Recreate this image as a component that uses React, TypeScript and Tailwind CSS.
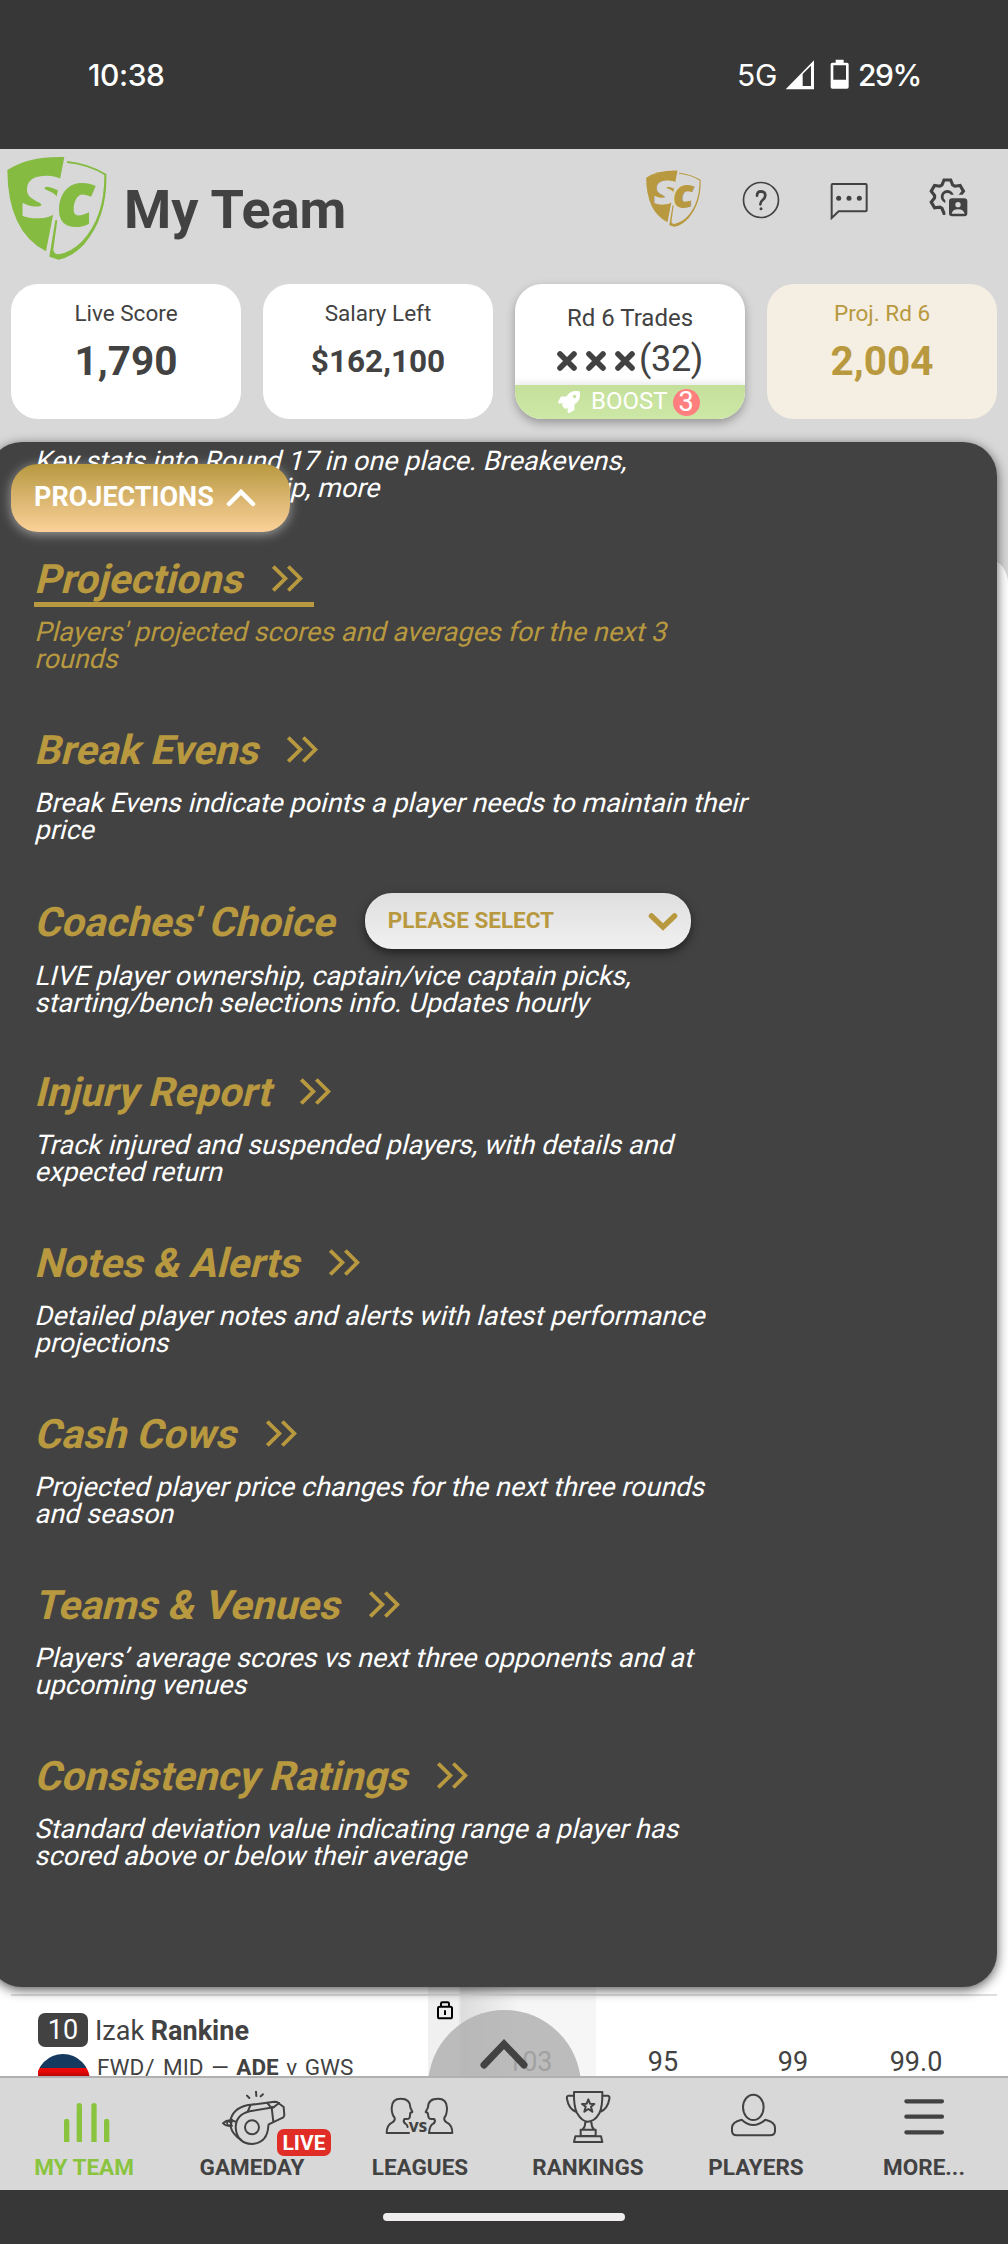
import React from "react";
import { FaRocket } from "react-icons/fa";

const INK = "#424242";
const GOLD = "#b8993f";

function Logo({ color, className }: { color: string; className: string }) {
  return (
    <svg viewBox="20 348 300 312" className={className} preserveAspectRatio="none">
      <path d="M21 390Q85 348 192 351L137 634Q22 575 21 390Z" fill={color} />
      <path
        fillRule="evenodd"
        fill={color}
        d="M201 363Q266 370 318 402Q322 530 252 612Q216 651 175 659L147 650L165 541L171 541L159 628Q159 643 175 643Q214 636 246 603Q313 530 312 405Q266 376 200 369Z"
      />
      <text
        x="66"
        y="532"
        fill="#d8d8d8"
        stroke="#d8d8d8"
        strokeWidth="5"
        fontFamily="Open Sans"
        fontStyle="italic"
        fontWeight="800"
        fontSize="220"
        textLength="124"
        lengthAdjust="spacingAndGlyphs"
      >
        s
      </text>
      <text
        x="166"
        y="557"
        fill={color}
        stroke="#d8d8d8"
        strokeWidth="14"
        paintOrder="stroke"
        fontFamily="Open Sans"
        fontStyle="italic"
        fontWeight="800"
        fontSize="226"
        textLength="117"
        lengthAdjust="spacingAndGlyphs"
      >
        c
      </text>
    </svg>
  );
}

function gearPath(cx: number, cy: number) {
  const pts: string[] = [];
  for (let i = 0; i < 6; i++) {
    const a = (i * Math.PI) / 3;
    const corners = [
      [-16, -35],
      [-10, -50],
      [10, -50],
      [16, -35],
    ];
    for (const [x, y] of corners) {
      const px = cx + x * Math.cos(a) - y * Math.sin(a);
      const py = cy + x * Math.sin(a) + y * Math.cos(a);
      pts.push(px.toFixed(1) + " " + py.toFixed(1));
    }
  }
  return "M" + pts.join("L") + "Z";
}

function StatusBar() {
  return (
    <div className="flex h-[149px] shrink-0 items-start justify-between bg-[#373737] pl-[88px] pr-[89px] pt-[54px] font-['Inter'] text-[30px] leading-[42px] text-white">
      <span className="font-medium tracking-[-0.4px]">10:38</span>
      <div className="flex items-start">
        <span className="mr-[8px] tracking-[-0.3px]">5G</span>
        <svg viewBox="844 55 195 99" className="mt-[4px] h-[33px] w-[65px]" fill="#fff">
          <path fillRule="evenodd" d="M846 149L931 62V149ZM897 103L922 78V139H897Z" />
          <path fillRule="evenodd" d="M996 60H1020V69H1030Q1035 69 1035 74V142Q1035 147 1030 147H986Q981 147 981 142V74Q981 69 986 69H996ZM989 77V120H1027V77Z" />
        </svg>
        <span className="ml-[8px] w-[61px] whitespace-nowrap font-medium tracking-[-1.4px]">29%</span>
      </div>
    </div>
  );
}

function HeaderIcons() {
  return (
    <div className="flex items-start">
      <Logo color={GOLD} className="mt-[21px] h-[57px] w-[55px]" />
      <svg viewBox="709 420 120 120" className="ml-[40px] mt-[31px] size-[40px]" fill="none" stroke={INK}>
        <circle cx="769" cy="480" r="52.5" strokeWidth="5" />
        <path d="M757 467Q757 454 769 454Q782 455 782 467Q781 475 774 480Q767 485 767 493" strokeWidth="8" strokeLinecap="round" />
        <circle cx="769" cy="506" r="4.5" fill={INK} stroke="none" />
      </svg>
      <svg viewBox="973 420 120 120" className="ml-[48px] mt-[31px] size-[40px]" fill="none" stroke={INK}>
        <path d="M981 534V435Q981 432 984 432H1083Q1086 432 1086 435V511Q1086 514 1083 514H1002Z" strokeWidth="6" />
        <g fill={INK} stroke="none">
          <circle cx="1002" cy="475" r="7.5" />
          <circle cx="1033" cy="475" r="7.5" />
          <circle cx="1064" cy="475" r="7.5" />
        </g>
      </svg>
      <svg viewBox="1270 411 120 120" className="ml-[59px] mt-[28px] size-[40px]" fill="none" stroke={INK}>
        <clipPath id="gearclip">
          <path d="M1260 400H1400V464H1337Q1322 464 1322 479V540H1260Z" />
        </clipPath>
        <g clipPath="url(#gearclip)">
          <path d={gearPath(1328, 470)} strokeWidth="9.5" />
          <circle cx="1328" cy="470" r="15.5" strokeWidth="8.5" />
        </g>
        <rect x="1333" y="475" width="55" height="54" rx="9" fill={INK} stroke="none" />
        <circle cx="1360" cy="494" r="8" fill="#d8d8d8" stroke="none" />
        <path d="M1341 521Q1344 508 1360 508T1380 521Z" fill="#d8d8d8" stroke="none" />
      </svg>
    </div>
  );
}

function Cross() {
  return (
    <svg viewBox="0 0 20 20" className="size-[20px]" stroke={INK} strokeWidth="5.6" strokeLinecap="round">
      <path d="M3 3L17 17M17 3L3 17" />
    </svg>
  );
}

function StatCard({ label, value, small, gold }: { label: string; value: string; small?: boolean; gold?: boolean }) {
  return (
    <div className={"flex h-[135px] flex-col items-center rounded-[27px] pt-[16px] " + (gold ? "bg-[#f5eee2] text-[#b8993f]" : "bg-white text-[#424242]")}>
      <span className="text-[22.5px] leading-[27px]">{label}</span>
      <span className={(small ? "text-[31.5px] leading-[69px]" : "text-[40.5px] leading-[69px]") + " font-bold"}>{value}</span>
    </div>
  );
}

function TradesCard() {
  return (
    <div className="flex h-[135px] flex-col items-center overflow-hidden rounded-[27px] bg-white pt-[20px] text-[#424242] shadow-[0_4px_10px_rgba(0,0,0,0.3)]">
      <span className="text-[24px] leading-[28px]">Rd 6 Trades</span>
      <div className="mt-[4px] flex h-[49px] items-center gap-[9px]">
        <Cross />
        <Cross />
        <Cross />
        <span className="-ml-[5px] -mt-[2px] text-[36px] leading-[45px] tracking-[-0.3px]">(32)</span>
      </div>
      <div className="flex h-[34px] w-full items-center bg-linear-to-b from-[#c5e09b] to-[#cde8a6] pl-[43px] text-white shadow-[0_-2px_8px_rgba(0,0,0,0.1)]">
        <FaRocket className="size-[22px]" />
        <span className="-mt-[2px] ml-[11px] text-[24px] leading-[30px]">BOOST</span>
        <span className="ml-[5px] mt-px flex size-[27px] items-center justify-center rounded-full bg-[#ff7f7f] text-[27px] leading-[27px]">3</span>
      </div>
    </div>
  );
}

function DoubleChevron() {
  return (
    <svg viewBox="0 0 93 80" className="h-[27px] w-[31px]" fill="none" stroke={GOLD} strokeWidth="11.5">
      <path d="M4 4L40 40L4 76M49 4L85 40L49 76" />
    </svg>
  );
}

function ObliqueLines({ lines }: { lines: string[] }) {
  return (
    <>
      {lines.map((line) => (
        <span key={line} className="block w-max origin-[0_23px] -skew-x-[14deg]">
          {line}
        </span>
      ))}
    </>
  );
}

const items = [
  { title: "Projections", lines: ["Players' projected scores and averages for the next 3", "rounds"], active: true },
  { title: "Break Evens", lines: ["Break Evens indicate points a player needs to maintain their", "price"] },
  { title: "Coaches' Choice", lines: ["LIVE player ownership, captain/vice captain picks,", "starting/bench selections info. Updates hourly"], select: true },
  { title: "Injury Report", lines: ["Track injured and suspended players, with details and", "expected return"] },
  { title: "Notes & Alerts", lines: ["Detailed player notes and alerts with latest performance", "projections"] },
  { title: "Cash Cows", lines: ["Projected player price changes for the next three rounds", "and season"] },
  { title: "Teams & Venues", lines: ["Players’ average scores vs next three opponents and at", "upcoming venues"] },
  { title: "Consistency Ratings", lines: ["Standard deviation value indicating range a player has", "scored above or below their average"] },
];

function MenuPanel() {
  return (
    <div className="absolute -left-[12px] top-[442px] h-[1545px] w-[1009px] rounded-[34px] bg-[#424242] pl-[46px] pt-[6px] text-[27px] leading-[27px] text-white shadow-[0_3px_12px_rgba(0,0,0,0.65)]">
      <ObliqueLines lines={["Key stats into Round 17 in one place. Breakevens,", "projections, ownership, more"]} />
      <button className="absolute left-[23px] top-[22px] flex h-[68px] w-[279px] items-center rounded-[27px] bg-linear-to-b from-[#b8993f] to-[#fbd199] pl-[23px] font-bold shadow-[0_2px_12px_rgba(255,255,255,0.5)]">
        <span className="-mt-[1px]">PROJECTIONS</span>
        <svg viewBox="0 0 30 18" className="ml-[12px] h-[18px] w-[30px]" fill="none" stroke="#fff" strokeWidth="4.5" strokeLinecap="round">
          <path d="M3 15L15 3L27 15" />
        </svg>
      </button>
      <div className="mt-[53px]">
        {items.map((it) => (
          <div key={it.title} className="flex h-[171px] flex-col items-start">
            <div
              className={
                "flex h-[52px] items-center border-b-[5px] text-[40.5px] font-bold leading-[47px] text-[#b8993f] " +
                (it.active ? "border-[#b8993f]" : "border-transparent")
              }
            >
              <span className={"origin-[0_37px] -skew-x-[14deg] " + (it.select ? "mt-[3px]" : "mt-[2px]")}>{it.title}</span>
              {it.select ? (
                <div className="ml-[31px] mt-px flex h-[56px] w-[326px] shrink-0 items-center justify-between rounded-[27px] bg-linear-to-b from-[#dfdfdf] to-[#f0f0f0] pl-[23px] pr-[13px] shadow-[0_4px_10px_rgba(0,0,0,0.5)]">
                  <span className="-mt-[2px] text-[22.5px] leading-[30px]">PLEASE SELECT</span>
                  <svg viewBox="0 0 30 20" className="mt-[2px] h-[20px] w-[30px]" fill="none" stroke={GOLD} strokeWidth="5.5" strokeLinecap="round">
                    <path d="M3.5 4L15 15L26.5 4" />
                  </svg>
                </div>
              ) : (
                <span className="ml-[30px] mr-[11px]">
                  <DoubleChevron />
                </span>
              )}
            </div>
            <div className={(it.select ? "mt-[14px] " : "mt-[12px] ") + (it.active ? "text-[#b8993f]" : "")}>
              <ObliqueLines lines={it.lines} />
            </div>
          </div>
        ))}
      </div>
    </div>
  );
}

function PlayerRow() {
  return (
    <div className="relative flex h-[90px] flex-col bg-white text-[27px] text-[#424242]">
      <div className="flex h-full">
        <div className="w-[428px] pl-[38px] pt-[27px]">
          <div className="flex items-center">
            <span className="flex h-[34px] w-[50px] items-center justify-center rounded-[7px] bg-[#424242] pt-px leading-[33px] text-white">10</span>
            <span className="ml-[7px] pt-[2px] leading-[32px]">
              Izak <b>Rankine</b>
            </span>
          </div>
          <div className="mt-[7px] flex h-[22px] overflow-hidden">
            <div className="-ml-[2px] size-[54px] shrink-0 rounded-full bg-[linear-gradient(#163a5f_0_26%,#e80808_26%_32%,#a50505_45%)]" />
            <span className="ml-[7px] whitespace-pre text-[22.5px] leading-[26px] [word-spacing:2px]">
              FWD<span className="mx-[1px]">/</span> MID — <b>ADE</b> v GWS
            </span>
          </div>
        </div>
        <div className="flex w-[33px] justify-center border-r-2 border-[#e4e4e4] bg-[#f0f0f0] pt-[15px]">
          <svg viewBox="1312 125 52 57" className="ml-[3px] h-[19px] w-[18px]" fill="none" stroke="#000" strokeWidth="6">
            <rect x="1317" y="142" width="42" height="35" rx="5" />
            <path d="M1326 142V133Q1326 129 1330 129H1346Q1350 129 1350 133V142M1338 153V167" />
          </svg>
        </div>
        <div className="w-[135px] bg-[linear-gradient(90deg,#dcdcdc,#f6f6f6_45%)] pl-[46px] pt-[63px] leading-[27px]">103</div>
        <div className="grid flex-1 grid-cols-[134px_126px_120px] pt-[63px] text-center leading-[27px]">
          <span>95</span>
          <span>99</span>
          <span>99.0</span>
        </div>
      </div>
      <div className="absolute left-[11px] right-[11px] top-[8px] h-[2px] bg-[#dedede]" />
      <div className="absolute left-[428px] top-[24px] h-[66px] w-[153px] overflow-hidden">
        <div className="size-[153px] rounded-full bg-[#b2b2b2]/85" />
        <svg viewBox="0 0 50 34" className="absolute left-[51px] top-[26px] h-[34px] w-[50px]" fill="none" stroke={INK} strokeWidth="7" strokeLinecap="round">
          <path d="M5 29L25 8L45 29" />
        </svg>
      </div>
    </div>
  );
}

function NavItem({ label, vb, active, children }: { label: string; vb: string; active?: boolean; children: React.ReactNode }) {
  return (
    <div className={"relative flex flex-col items-center pt-[10px] " + (active ? "text-[#8ac43f]" : "text-[#424242]")}>
      <svg viewBox={vb} className="h-[60px] w-[80px]" fill="none" stroke="currentColor" strokeWidth="6" strokeLinejoin="round" strokeLinecap="round">
        {children}
      </svg>
      {label === "GAMEDAY" && (
        <span className="absolute left-[109px] top-[51px] flex h-[27px] w-[54px] items-center justify-center rounded-[7px] bg-[#e02d26] pt-px text-[21px] font-bold leading-[26px] text-white">LIVE</span>
      )}
      <span className="mt-[6px] text-[22.5px] font-bold leading-[27px]">{label}</span>
    </div>
  );
}

function BottomNav() {
  return (
    <div className="grid h-[114px] shrink-0 grid-cols-6 border-t-2 border-[#b0b0b0] bg-[#d8d8d8]">
      <NavItem label="MY TEAM" vb="132 384 240 180" active>
        <g fill="currentColor" stroke="none">
          <path d="M192 546V484Q192 476 200 476T208 484V546ZM230 546V437Q230 429 238 429T246 437V546ZM274 546V437Q274 429 282 429T290 437V546ZM312 546V484Q312 476 320 476T328 484V546Z" />
        </g>
      </NavItem>
      <NavItem label="GAMEDAY" vb="636 384 240 180">
        <circle cx="756" cy="502" r="21" />
        <path d="M821 442L749 454Q708 464 707 502Q710 550 756 552Q802 549 805 498L806 493L850 472L853 466L851 441L831 426L823 425L741 436Q697 446 690 486" />
        <path d="M821 442L837 429M815 443L820 485M751 437L744 453M802 429L813 442L821 442" />
        <path d="M706 485Q685 475 669 490Q680 501 696 497M696 479L692 500Q697 524 724 540" />
        <circle cx="687" cy="490" r="6" strokeWidth="5" />
        <path d="M741 407L748 414M768 395L769 408M789 403L782 409" />
      </NavItem>
      <NavItem label="LEAGUES" vb="1140 384 240 180">
        <path d="M1227 519H1160Q1160 495 1177 487Q1186 482 1184 473Q1175 464 1175 443Q1176 416 1202 416Q1231 416 1231 442L1237 456L1231 459L1229 473Q1226 478 1213 477Q1208 485 1216 491Q1222 494 1223 501" />
        <path d="M1289 519H1357Q1357 495 1340 487Q1331 482 1333 473Q1341 464 1341 443Q1340 416 1314 416Q1284 416 1284 442L1277 456L1283 459L1286 473Q1289 478 1303 477Q1308 485 1300 491Q1289 496 1287 519" />
        <text x="1226" y="516" fill="currentColor" stroke="none" fontFamily="Open Sans" fontWeight="700" fontSize="52" textLength="56" lengthAdjust="spacingAndGlyphs">
          vs
        </text>
      </NavItem>
      <NavItem label="RANKINGS" vb="132 384 240 180">
        <path d="M210 396H295Q296 440 286 460Q272 485 252 485Q234 485 219 459Q209 440 210 396ZM210 407H193Q187 409 189 417Q194 447 217 456M295 407H312Q318 409 316 417Q311 447 288 456M244 486Q244 500 236 508M262 486Q262 500 270 508M230 509H275V528H230ZM214 529H291L295 546H210Z" />
        <path d="M253 418L258 431L271 432L261 440L265 455L253 447L241 455L245 440L234 432L248 431Z" />
      </NavItem>
      <NavItem label="PLAYERS" vb="636 384 240 180">
        <ellipse cx="748" cy="442" rx="31" ry="38" />
        <path d="M713 479Q684 486 684 503V513Q684 526 699 526H798Q813 526 813 513V503Q813 486 784 479Q748 511 713 479Z" />
      </NavItem>
      <NavItem label="MORE..." vb="1140 384 240 180">
        <path strokeWidth="12.5" d="M1207 424H1314M1207 470H1314M1207 517H1314" />
      </NavItem>
    </div>
  );
}

export default function App() {
  return (
    <div className="relative flex h-[2244px] w-[1008px] flex-col overflow-hidden bg-[#d8d8d8] font-['Roboto',sans-serif]">
      <StatusBar />
      <header className="flex h-[135px] shrink-0 items-start pl-[7px] pr-[40px]">
        <Logo color="#84bb40" className="mt-[7px] h-[104px] w-[100px]" />
        <h1 className="ml-[17px] mt-[29px] flex-1 text-[54px] font-bold leading-[64px] text-[#424242]">My Team</h1>
        <HeaderIcons />
      </header>
      <div className="grid shrink-0 grid-cols-4 gap-[22px] px-[11px]">
        <StatCard label="Live Score" value="1,790" />
        <StatCard label="Salary Left" value="$162,100" small />
        <TradesCard />
        <StatCard label="Proj. Rd 6" value="2,004" gold />
      </div>
      <main className="mt-[137px] flex flex-1 flex-col justify-end rounded-t-[27px] bg-white">
        <PlayerRow />
      </main>
      <BottomNav />
      <div className="flex h-[54px] shrink-0 justify-center bg-[#373737] pt-[23px]">
        <div className="h-[8px] w-[242px] rounded-full bg-[#efeded]" />
      </div>
      <MenuPanel />
    </div>
  );
}
